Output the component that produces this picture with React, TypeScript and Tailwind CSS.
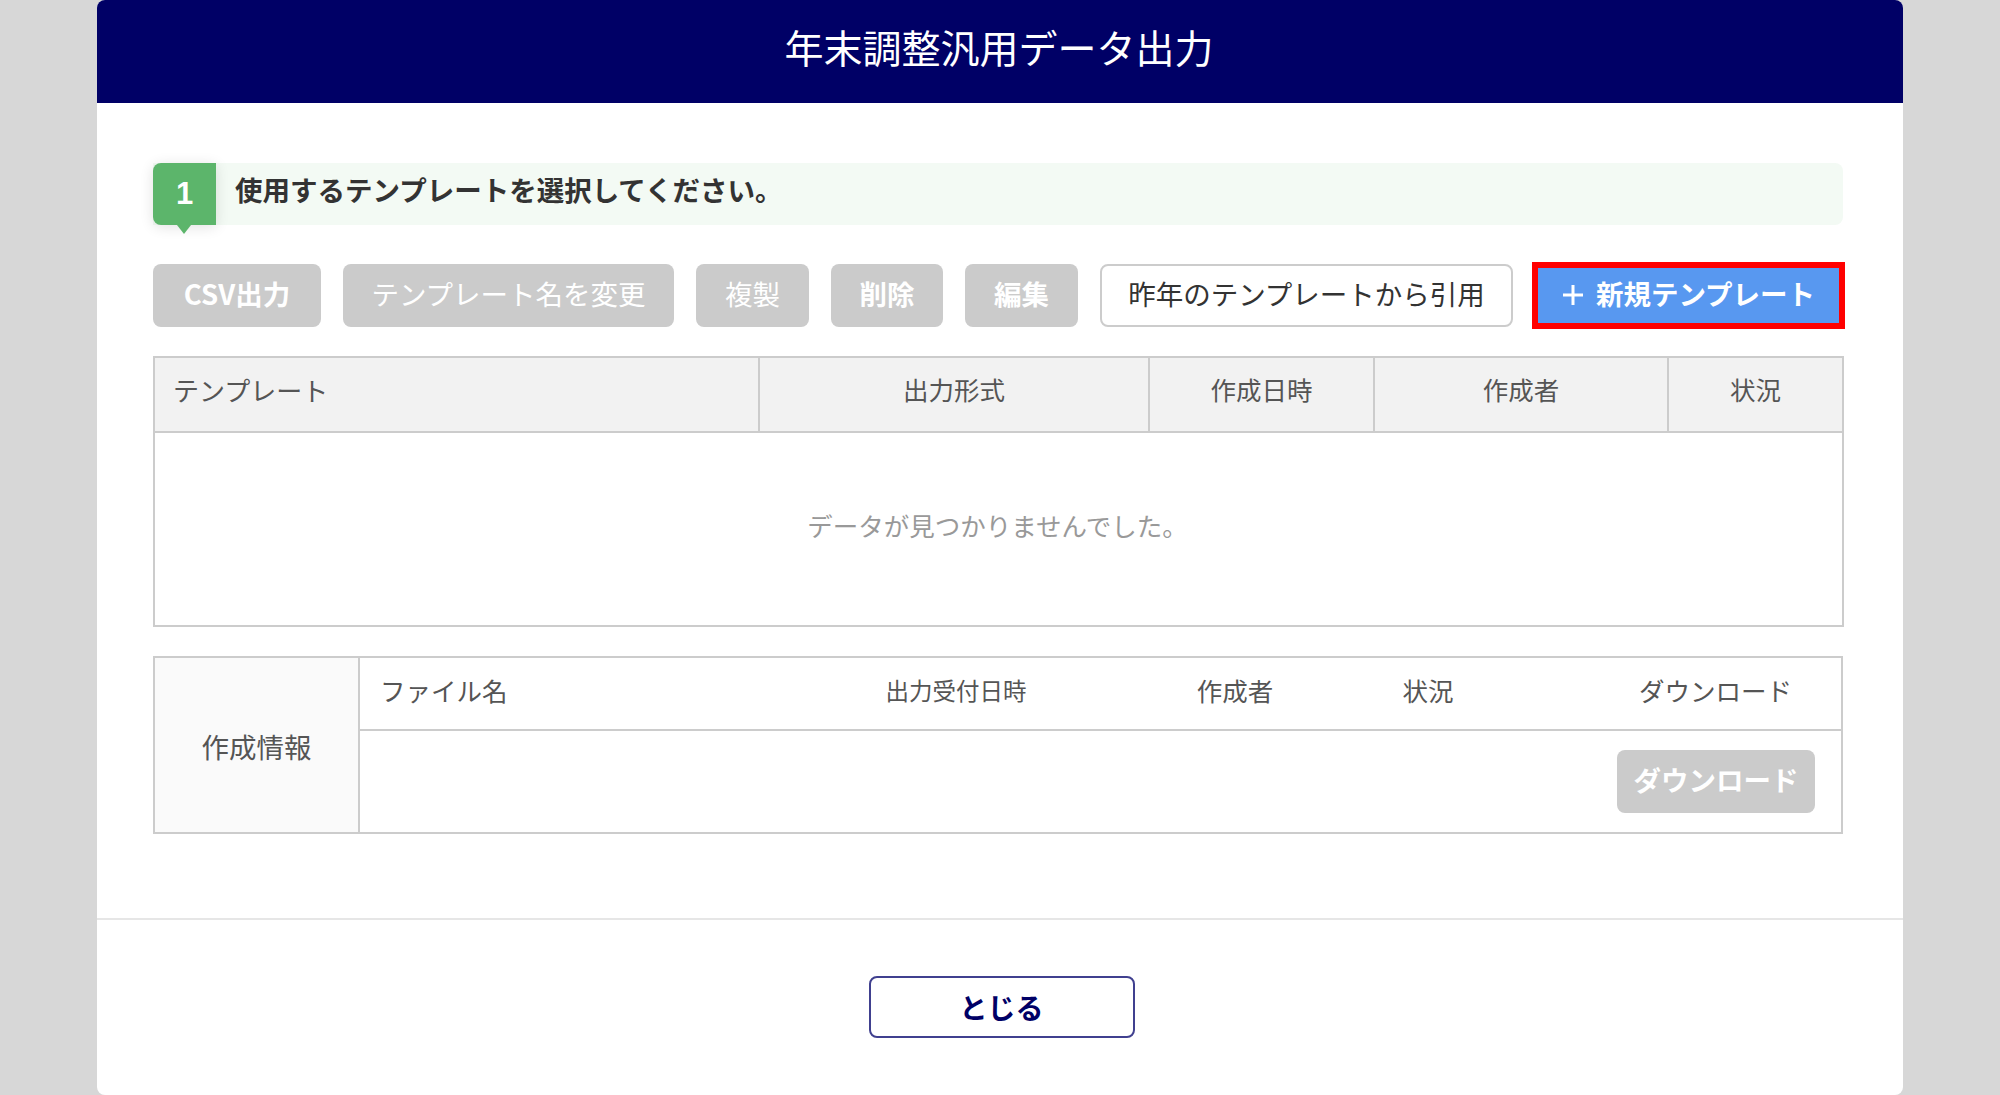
const font = { fontFamily: '"Noto Sans CJK JP", "Noto Sans", sans-serif' }

const grayBtn =
  'flex h-[63px] shrink-0 items-center justify-center rounded-[8px] bg-[#cbcbcb] pb-[4px] text-[27.5px] text-white'

export default function App() {
  return (
    <div className="h-[1095px] overflow-hidden bg-[#d7d7d7] pl-[97px]" style={font}>
      <div className="flex h-[1095px] w-[1806px] flex-col overflow-hidden rounded-[8px] bg-white">
        {/* Header */}
        <div className="flex h-[103px] items-center justify-center bg-[#000066] pb-[10px] pr-[2px] text-[39px] text-white">
          年末調整汎用データ出力
        </div>

        {/* Body */}
        <div className="pb-[84px] pl-[56px] pr-[60px] pt-[60px]">
          {/* Step title */}
          <div className="flex h-[62px] items-center rounded-r-[8px] bg-[#f3faf4]">
            <div className="relative flex h-[62px] w-[63px] items-center justify-center rounded-l-[8px] bg-[#5cb56b] text-[31px] font-bold text-white shadow-[0_2px_14px_rgba(0,0,0,0.12)] [font-family:'Liberation_Sans',sans-serif]">
              1
              <span className="absolute left-[24px] top-[62px] h-0 w-0 border-x-[7px] border-t-[9px] border-x-transparent border-t-[#5cb56b]" />
            </div>
            <span className="ml-[19px] pb-[8px] text-[27.5px] font-bold text-[#333333]">
              使用するテンプレートを選択してください。
            </span>
          </div>

          {/* Actions */}
          <div className="mt-[39px] flex h-[63px] items-center gap-[22px]">
            <button className={`${grayBtn} w-[168px] font-bold`}>CSV出力</button>
            <button className={`${grayBtn} w-[331px]`}>テンプレート名を変更</button>
            <button className={`${grayBtn} w-[113px]`}>複製</button>
            <button className={`${grayBtn} w-[112px] font-bold`}>削除</button>
            <button className={`${grayBtn} w-[113px] font-bold`}>編集</button>
            <button className="flex h-[63px] w-[413px] shrink-0 items-center justify-center rounded-[8px] border-2 border-[#cccccc] bg-white pb-[4px] text-[27.5px] text-[#333333]">
              昨年のテンプレートから引用
            </button>
            <button className="-ml-[3px] flex h-[67px] w-[313px] shrink-0 items-center justify-center gap-[12px] border-[6px] border-[#ff0000] bg-[#5898f0] pb-[4px] text-[27.5px] font-bold text-white">
              <svg width="22" height="22" viewBox="0 0 22 22" fill="none" stroke="white" strokeWidth="3" className="mt-[3px]">
                <path d="M11 1v20M1 11h20" />
              </svg>
              新規テンプレート
            </button>
          </div>

          {/* Templates */}
          <table className="mt-[29px] w-[1689px] table-fixed border-collapse text-[25.5px] text-[#555555]">
            <colgroup>
              <col className="w-[605px]" />
              <col className="w-[390px]" />
              <col className="w-[225px]" />
              <col className="w-[294px]" />
              <col className="w-[175px]" />
            </colgroup>
            <thead>
              <tr className="h-[75px] bg-[#f2f2f2]">
                <th className="border-2 border-[#cccccc] pb-[10px] pl-[18px] text-left text-[26px] font-normal">テンプレート</th>
                <th className="border-2 border-[#cccccc] pb-[10px] font-normal">出力形式</th>
                <th className="border-2 border-[#cccccc] pb-[10px] font-normal">作成日時</th>
                <th className="border-2 border-[#cccccc] pb-[10px] font-normal">作成者</th>
                <th className="border-2 border-[#cccccc] pb-[10px] font-normal">状況</th>
              </tr>
            </thead>
            <tbody>
              <tr className="h-[194px]">
                <td colSpan={5} className="border-2 border-[#cccccc] pb-[8px] pr-[2px] text-center text-[25.5px] text-[#999999]">
                  データが見つかりませんでした。
                </td>
              </tr>
            </tbody>
          </table>

          {/* Output info */}
          <div className="mt-[29px] flex h-[178px] w-[1690px] border-2 border-[#cccccc] text-[25.5px] text-[#555555]">
            <div className="flex w-[205px] items-center justify-center border-r-2 border-[#cccccc] bg-[#fafafa] pt-[4px] text-[27.5px]">
              作成情報
            </div>
            <div className="flex flex-1 flex-col">
              <div className="grid h-[73px] grid-cols-[460px_272px_286px_100px_1fr] items-center border-b-2 border-[#cccccc] pb-[6px]">
                <span className="pl-[20px]">ファイル名</span>
                <span className="text-center text-[23.5px]">出力受付日時</span>
                <span className="text-center">作成者</span>
                <span className="text-center">状況</span>
                <span className="pr-[49px] text-right">ダウンロード</span>
              </div>
              <div className="flex flex-1 items-center justify-end pr-[26px]">
                <button className={`${grayBtn} w-[198px] font-bold`}>ダウンロード</button>
              </div>
            </div>
          </div>
        </div>

        {/* Footer */}
        <div className="flex justify-center border-t-2 border-[#e6e6e6] pl-[3px] pt-[56px]">
          <button className="flex h-[62px] w-[266px] items-center justify-center rounded-[8px] border-2 border-[#40408f] bg-white text-[28px] font-bold text-[#000066]">
            とじる
          </button>
        </div>
      </div>
    </div>
  )
}
